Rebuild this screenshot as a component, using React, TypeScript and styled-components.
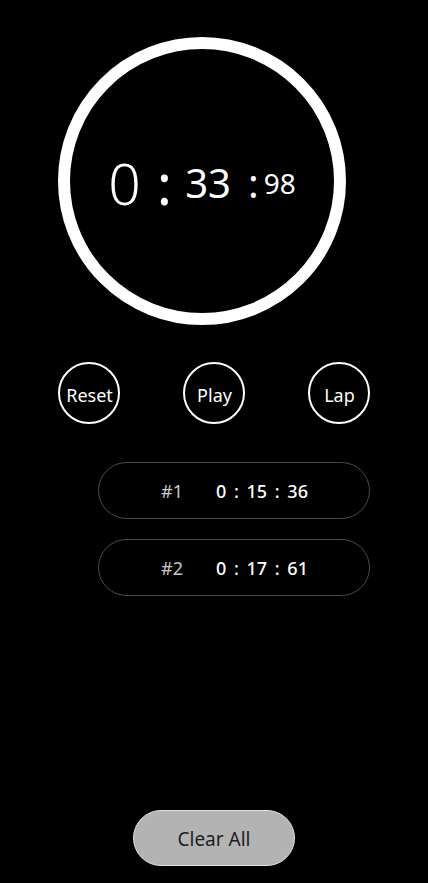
import React from 'react';
import styled, { createGlobalStyle } from 'styled-components';

const GlobalStyle = createGlobalStyle`
  html, body {
    margin: 0;
    padding: 0;
    background: #000;
  }
  body {
    font-family: 'Noto Sans', 'Noto Sans CJK KR', sans-serif;
  }
`;

const Page = styled.div`
  height: 883px;
  display: flex;
  flex-direction: column;
  background: #000;
  color: #fff;
  box-sizing: border-box;
  padding-top: 37px;
`;

const Dial = styled.div`
  width: 288px;
  height: 288px;
  margin-left: 58px;
  box-sizing: border-box;
  border: 12px solid #fff;
  border-radius: 50%;
  display: flex;
  align-items: center;
  justify-content: center;
  padding-top: 4px;
`;

const Segment = styled.span<{ $size: number; $gap: number; $after: number }>`
  display: inline-flex;
  align-items: baseline;
  gap: ${({ $gap }) => $gap}px;
  margin-right: ${({ $after }) => $after}px;
  font-size: ${({ $size }) => $size}px;
  line-height: 1;
`;

const Digits = styled.span<{ $light?: boolean }>`
  font-weight: ${({ $light }) => ($light ? 300 : 400)};
`;

const Colon = styled.span`
  font-weight: 400;
`;

const Controls = styled.div`
  display: flex;
  justify-content: center;
  gap: 63px;
  margin-top: 37px;
`;

const RoundButton = styled.button`
  width: 62px;
  height: 62px;
  border-radius: 50%;
  border: 2px solid #fff;
  background: transparent;
  color: #fff;
  font-family: inherit;
  font-size: 18px;
  padding: 3px 0 0 1px;
  display: flex;
  align-items: center;
  justify-content: center;
  cursor: pointer;
`;

const LapList = styled.ul`
  list-style: none;
  margin: 38px 0 0 98px;
  padding: 0;
  width: 272px;
  display: flex;
  flex-direction: column;
  gap: 20px;
`;

const LapRow = styled.li`
  height: 57px;
  box-sizing: border-box;
  border: 1px solid #4a4a4a;
  border-radius: 29px;
  display: flex;
  align-items: center;
  padding-left: 62px;
  gap: 33px;
  font-size: 18px;
`;

const LapIndex = styled.span`
  color: #c8c8c8;
`;

const LapTime = styled.span`
  color: #fff;
  font-weight: 500;
  word-spacing: 3px;
`;

const Footer = styled.div`
  margin-top: auto;
  padding-bottom: 17px;
  display: flex;
  justify-content: center;
`;

const ClearButton = styled.button`
  width: 162px;
  height: 56px;
  border-radius: 28px;
  border: 1px solid #e0e0e0;
  background: #b3b3b3;
  color: #1e1e1e;
  font-family: inherit;
  font-size: 19px;
  padding: 2px 0 0;
  cursor: pointer;
`;

const laps = [
  { id: 1, time: '0 : 15 : 36' },
  { id: 2, time: '0 : 17 : 61' },
];

export default function App() {
  return (
    <>
      <GlobalStyle />
      <Page>
        <Dial>
          <Segment $size={57} $gap={16} $after={13}>
            <Digits $light>0</Digits>
            <Colon>:</Colon>
          </Segment>
          <Segment $size={40} $gap={17} $after={5}>
            <Digits>33</Digits>
            <Colon>:</Colon>
          </Segment>
          <Segment $size={28} $gap={0} $after={0}>
            <Digits>98</Digits>
          </Segment>
        </Dial>
        <Controls>
          <RoundButton>Reset</RoundButton>
          <RoundButton>Play</RoundButton>
          <RoundButton>Lap</RoundButton>
        </Controls>
        <LapList>
          {laps.map((lap) => (
            <LapRow key={lap.id}>
              <LapIndex>#{lap.id}</LapIndex>
              <LapTime>{lap.time}</LapTime>
            </LapRow>
          ))}
        </LapList>
        <Footer>
          <ClearButton>Clear All</ClearButton>
        </Footer>
      </Page>
    </>
  );
}
